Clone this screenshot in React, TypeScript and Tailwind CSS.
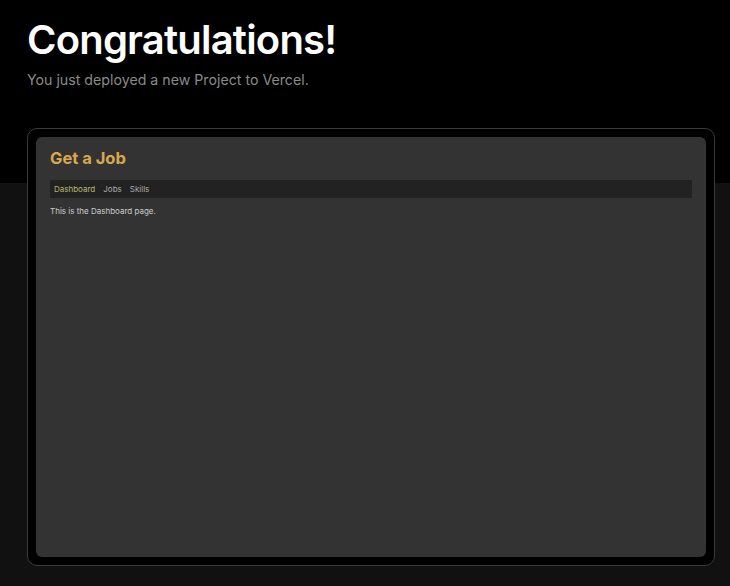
import React from 'react';

const navItems = [
  { label: 'Dashboard', active: true },
  { label: 'Jobs', active: false },
  { label: 'Skills', active: false },
];

export default function App() {
  return (
    <div className="relative min-h-[586px] bg-[#111111] font-['Inter',sans-serif]">
      <div className="h-[183px] bg-black" />
      <div className="absolute inset-x-0 top-0 pl-[27px] pr-[15px] pt-[20px]">
        <h1 className="text-[40px] leading-[40px] font-semibold tracking-[-0.02em] text-white">
          Congratulations!
        </h1>
        <p className="mt-[10px] text-[14.2px] leading-5 text-[#8a8a8a]">
          You just deployed a new Project to Vercel.
        </p>
        <div className="mt-[38px] h-[438px] rounded-[10px] border border-[#3a3a3a] bg-black p-2">
          <div className="h-full rounded-md bg-[#333333] px-[14px] pt-[9px]">
            <h2 className="text-[16.5px] leading-6 font-bold text-[#d9a84e]">Get a Job</h2>
            <nav className="mt-[10px] flex h-[18px] items-center gap-2 bg-[#222222] px-1 text-[8px]">
              {navItems.map(({ label, active }) => (
                <span key={label} className={active ? 'text-[#b8b86a]' : 'text-[#aaaaaa]'}>
                  {label}
                </span>
              ))}
            </nav>
            <p className="mt-[7px] text-[8px] leading-3 text-[#cccccc]">This is the Dashboard page.</p>
          </div>
        </div>
      </div>
    </div>
  );
}
